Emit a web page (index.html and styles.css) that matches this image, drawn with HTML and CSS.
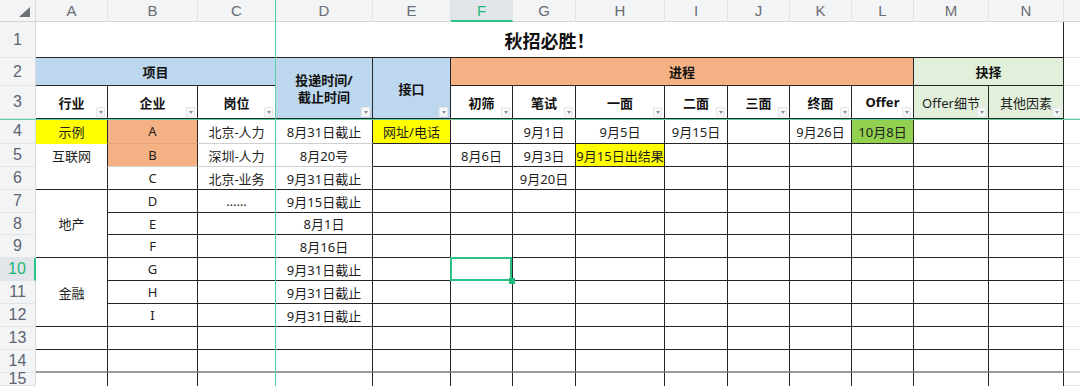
FILE: index.html
```html
<!DOCTYPE html>
<html lang="zh-CN">
<head>
<meta charset="utf-8">
<title>秋招必胜</title>
<link rel="stylesheet" href="styles.css">
</head>
<body>
<div class="sheet">
  <!-- column header -->
  <div class="corner"><span class="tri"></span></div>
  <div class="ch">A</div><div class="ch">B</div><div class="ch">C</div><div class="ch">D</div><div class="ch">E</div>
  <div class="ch ch-sel">F</div><div class="ch">G</div><div class="ch">H</div><div class="ch">I</div><div class="ch">J</div>
  <div class="ch">K</div><div class="ch">L</div><div class="ch">M</div><div class="ch">N</div><div class="ch ch-o"></div>

  <!-- row 1 -->
  <div class="rh">1</div>
  <div class="c title span14">秋招必胜！</div>
  <div class="o"></div>

  <!-- row 2 -->
  <div class="rh">2</div>
  <div class="c hd blue span3">项目</div>
  <div class="c hd blue rspan2 two">投递时间/<br>截止时间<span class="dd"></span></div>
  <div class="c hd blue rspan2">接口<span class="dd"></span></div>
  <div class="c hd orange span7">进程</div>
  <div class="c hd green span2">抉择</div>
  <div class="o"></div>

  <!-- row 3 -->
  <div class="rh">3</div>
  <div class="c hd">行业<span class="dd"></span></div>
  <div class="c hd">企业<span class="dd"></span></div>
  <div class="c hd">岗位<span class="dd"></span></div>
  <div class="c hd">初筛<span class="dd"></span></div>
  <div class="c hd">笔试<span class="dd"></span></div>
  <div class="c hd">一面<span class="dd"></span></div>
  <div class="c hd">二面<span class="dd"></span></div>
  <div class="c hd">三面<span class="dd"></span></div>
  <div class="c hd">终面<span class="dd"></span></div>
  <div class="c hd">Offer<span class="dd"></span></div>
  <div class="c green">Offer细节<span class="dd"></span></div>
  <div class="c green">其他因素<span class="dd"></span></div>
  <div class="o"></div>

  <!-- row 4 -->
  <div class="rh">4</div>
  <div class="c yellow nb">示例</div>
  <div class="c orange ob">A</div>
  <div class="c lb">北京-人力</div>
  <div class="c lb">8月31日截止</div>
  <div class="c yellow">网址/电话</div>
  <div class="c"></div>
  <div class="c">9月1日</div>
  <div class="c">9月5日</div>
  <div class="c">9月15日</div>
  <div class="c"></div>
  <div class="c">9月26日</div>
  <div class="c lime">10月8日</div>
  <div class="c"></div>
  <div class="c"></div>
  <div class="o"></div>

  <!-- row 5 -->
  <div class="rh">5</div>
  <div class="c nb">互联网</div>
  <div class="c orange lb">B</div>
  <div class="c lb">深圳-人力</div>
  <div class="c lb">8月20号</div>
  <div class="c"></div>
  <div class="c">8月6日</div>
  <div class="c">9月3日</div>
  <div class="c yellow">9月15日出结果</div>
  <div class="c"></div><div class="c"></div><div class="c"></div><div class="c"></div><div class="c"></div><div class="c"></div>
  <div class="o"></div>

  <!-- row 6 -->
  <div class="rh">6</div>
  <div class="c"></div>
  <div class="c">C</div>
  <div class="c">北京-业务</div>
  <div class="c">9月31日截止</div>
  <div class="c"></div>
  <div class="c"></div>
  <div class="c">9月20日</div>
  <div class="c"></div><div class="c"></div><div class="c"></div><div class="c"></div><div class="c"></div><div class="c"></div><div class="c"></div>
  <div class="o"></div>

  <!-- row 7 -->
  <div class="rh">7</div>
  <div class="c rspan3">地产</div>
  <div class="c">D</div>
  <div class="c">……</div>
  <div class="c">9月15日截止</div>
  <div class="c"></div><div class="c"></div><div class="c"></div><div class="c"></div><div class="c"></div><div class="c"></div><div class="c"></div><div class="c"></div><div class="c"></div><div class="c"></div>
  <div class="o"></div>

  <!-- row 8 -->
  <div class="rh">8</div>
  <div class="c">E</div>
  <div class="c"></div>
  <div class="c">8月1日</div>
  <div class="c"></div><div class="c"></div><div class="c"></div><div class="c"></div><div class="c"></div><div class="c"></div><div class="c"></div><div class="c"></div><div class="c"></div><div class="c"></div>
  <div class="o"></div>

  <!-- row 9 -->
  <div class="rh">9</div>
  <div class="c">F</div>
  <div class="c"></div>
  <div class="c">8月16日</div>
  <div class="c"></div><div class="c"></div><div class="c"></div><div class="c"></div><div class="c"></div><div class="c"></div><div class="c"></div><div class="c"></div><div class="c"></div><div class="c"></div>
  <div class="o"></div>

  <!-- row 10 -->
  <div class="rh rh-sel">10</div>
  <div class="c rspan3">金融</div>
  <div class="c">G</div>
  <div class="c"></div>
  <div class="c">9月31日截止</div>
  <div class="c"></div>
  <div class="c sel"><span class="handle"></span></div>
  <div class="c"></div><div class="c"></div><div class="c"></div><div class="c"></div><div class="c"></div><div class="c"></div><div class="c"></div><div class="c"></div>
  <div class="o"></div>

  <!-- row 11 -->
  <div class="rh">11</div>
  <div class="c">H</div>
  <div class="c"></div>
  <div class="c">9月31日截止</div>
  <div class="c"></div><div class="c"></div><div class="c"></div><div class="c"></div><div class="c"></div><div class="c"></div><div class="c"></div><div class="c"></div><div class="c"></div><div class="c"></div>
  <div class="o"></div>

  <!-- row 12 -->
  <div class="rh">12</div>
  <div class="c">I</div>
  <div class="c"></div>
  <div class="c">9月31日截止</div>
  <div class="c"></div><div class="c"></div><div class="c"></div><div class="c"></div><div class="c"></div><div class="c"></div><div class="c"></div><div class="c"></div><div class="c"></div><div class="c"></div>
  <div class="o"></div>

  <!-- row 13 -->
  <div class="rh">13</div>
  <div class="c"></div><div class="c"></div><div class="c"></div><div class="c"></div><div class="c"></div><div class="c"></div><div class="c"></div>
  <div class="c"></div><div class="c"></div><div class="c"></div><div class="c"></div><div class="c"></div><div class="c"></div><div class="c"></div>
  <div class="o"></div>

  <!-- row 14 -->
  <div class="rh">14</div>
  <div class="c r14"></div><div class="c r14"></div><div class="c r14"></div><div class="c r14"></div><div class="c r14"></div><div class="c r14"></div><div class="c r14"></div>
  <div class="c r14"></div><div class="c r14"></div><div class="c r14"></div><div class="c r14"></div><div class="c r14"></div><div class="c r14"></div><div class="c r14"></div>
  <div class="o r14o"></div>

  <!-- row 15 -->
  <div class="rh">15</div>
  <div class="c last"></div><div class="c last"></div><div class="c last"></div><div class="c last"></div><div class="c last"></div><div class="c last"></div><div class="c last"></div>
  <div class="c last"></div><div class="c last"></div><div class="c last"></div><div class="c last"></div><div class="c last"></div><div class="c last"></div><div class="c last"></div>
  <div class="o"></div>

  <!-- freeze pane lines -->
  <div class="freeze-v"></div>
  <div class="freeze-h"></div>
</div>
</body>
</html>
```

FILE: styles.css
```css
* { box-sizing: border-box; }

html, body {
  margin: 0;
  padding: 0;
  background: #ffffff;
  overflow: hidden;
}

.sheet {
  position: relative;
  width: 1080px;
  height: 386px;
  overflow: hidden;
  display: grid;
  grid-template-columns: 36px 72px 90px 78px 97px 78px 62px 63px 89px 63px 62px 62px 62px 75px 75px 16px;
  grid-template-rows: 22px 36px 28px 33px 25px 23px 23px 23px 22px 23px 23px 23px 23px 23px 23px 13px;
  font-family: "Noto Sans", "Noto Sans CJK SC", sans-serif;
  font-size: 13px;
  color: #1e1e1e;
}

/* header strip */
.corner {
  position: relative;
  background: #f3f4f6;
  border-right: 1px solid #dcdcdc;
  border-bottom: 1px solid #d6d6d6;
}
.tri {
  position: absolute;
  right: 5px;
  bottom: 4px;
  width: 0;
  height: 0;
  border-left: 11px solid transparent;
  border-bottom: 10px solid #6f737a;
}

.ch {
  display: flex;
  align-items: center;
  justify-content: center;
  background: #f3f4f6;
  border-right: 1px solid #e1e2e4;
  border-bottom: 1px solid #d6d6d6;
  font-family: "Liberation Sans", Arial, sans-serif;
  font-size: 15px;
  color: #6a6d73;
}
.ch-o { border-right: none; }
.ch-sel {
  background: #e2e5e9;
  color: #1fb57a;
  border-bottom: 2px solid #2cc185;
}

.rh {
  display: flex;
  align-items: center;
  justify-content: center;
  background: #f3f4f6;
  border-right: 1px solid #d8d9dc;
  border-bottom: 1px solid #e3e4e6;
  font-family: "Liberation Sans", Arial, sans-serif;
  font-size: 16px;
  color: #5d6472;
}
.rh-sel {
  background: #e2e5e9;
  color: #1fb57a;
  border-right: 2px solid #2cc185;
}

/* cells */
.c {
  position: relative;
  display: flex;
  align-items: center;
  justify-content: center;
  white-space: nowrap;
  border-right: 1px solid #262626;
  border-bottom: 1px solid #262626;
}
.o {
  border-bottom: 1px solid #e3e3e3;
}

.span2 { grid-column: span 2; }
.span3 { grid-column: span 3; }
.span7 { grid-column: span 7; }
.span14 { grid-column: span 14; }
.rspan2 { grid-row: span 2; }
.rspan3 { grid-row: span 3; }

.title {
  font-size: 18px;
  font-weight: 700;
  color: #111;
}

.hd { font-weight: 700; color: #111; }
.two { line-height: 17px; text-align: center; padding-top: 2px; }

.blue { background: #bdd7ee; }
.orange { background: #f4b183; }
.green { background: #e2efda; }
.yellow { background: #ffff00; }
.lime { background: #92d050; }

.nb { border-bottom-color: transparent; }
.lb { border-bottom-color: #cfcfcf; }
.ob { border-bottom-color: #e9a272; }
.r14 { border-bottom: 2px solid #9a9a9a; }
.r14o { border-bottom: 2px solid #d6d6d6; }
.last { border-bottom: none; }

/* filter dropdown buttons */
.dd {
  position: absolute;
  right: 2px;
  bottom: 1px;
  width: 9px;
  height: 10px;
  background: #f7f8f9;
  border: 1px solid #e6e7e9;
  display: flex;
  align-items: center;
  justify-content: center;
}
.dd::after {
  content: "";
  width: 0;
  height: 0;
  border-left: 2.5px solid transparent;
  border-right: 2.5px solid transparent;
  border-top: 3px solid #8d9096;
}

/* selection */
.sel::before {
  content: "";
  position: absolute;
  left: -1px;
  top: -1px;
  right: 0;
  bottom: -1px;
  border: 2px solid #2bc285;
}
.handle {
  position: absolute;
  right: -3px;
  bottom: -4px;
  width: 6px;
  height: 6px;
  background: #21b87a;
  z-index: 2;
}

/* freeze pane lines */
.freeze-v {
  position: absolute;
  left: 275px;
  top: 0;
  width: 1px;
  height: 386px;
  background: #5ccf9f;
}
.freeze-h {
  position: absolute;
  left: 0;
  top: 119px;
  width: 1080px;
  height: 1px;
  background: #5ccf9f;
}
```
